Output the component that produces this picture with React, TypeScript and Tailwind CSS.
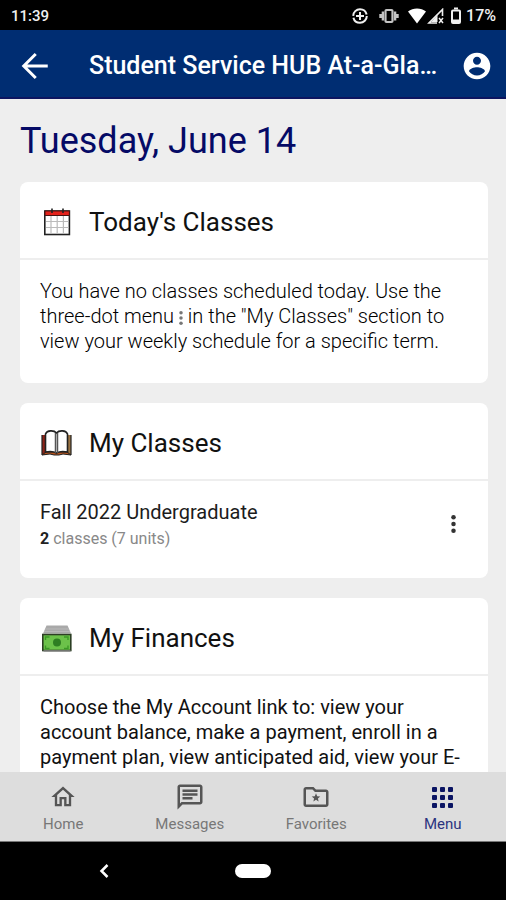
import type { ReactNode } from "react";

function CalendarIcon() {
  return (
    <svg viewBox="0 0 32 32" className="size-8" aria-hidden="true">
      <rect x="4.8" y="5" width="24.6" height="23.500" fill="#fff" stroke="#222" strokeWidth="1.6" />
      <path d="M5 5h24.400v4.500H5z" fill="#e3221b" stroke="#4a1210" strokeWidth="1" />
      <path d="M11 10v17.500M17.200 10v17.500M23.400 10v17.500M6 15.500h22.500M6 21.500h22.500" stroke="#bbb" strokeWidth="1.200" />
      <path d="M12 2.500v4.500M23 2.500v4.500" stroke="#222" strokeWidth="1.600" />
    </svg>
  );
}

function BookIcon() {
  return (
    <svg viewBox="0 0 32 32" className="size-8" aria-hidden="true">
      <path d="M2 8h4v20H2z" fill="#8e2318" />
      <path d="M27 8h4v20h-4z" fill="#9a7443" />
      <path d="M2 28V8M31 8v20" stroke="#222" strokeWidth="1.200" />
      <path d="M2 28l4-3h21l4 3-8-1-4 1h-5l-4-1z" fill="#b5531d" stroke="#222" strokeWidth="1" />
      <path d="M5.500 25V7C7 3 14 3 16.500 6 19 3 26 3 27.500 7v18C23 24 19 24.500 16.500 26 14 24.500 10 24 5.500 25z" fill="#fff" stroke="#222" strokeWidth="1.600" />
      <path d="M15.500 6v20M17.500 6v20" stroke="#555" strokeWidth="1.500" />
    </svg>
  );
}

function MoneyIcon() {
  return (
    <svg viewBox="0 0 32 32" className="size-8" aria-hidden="true">
      <path d="M6.500 3.500h21l3.500 8H3z" fill="#a9a9a9" />
      <path d="M5 7h24M4 9.500h26" stroke="#b8b8b8" strokeWidth="1" />
      <rect x="2.800" y="12.500" width="28" height="16" fill="#6cc24a" stroke="#2c3f24" strokeWidth="1.600" />
      <path d="M3.500 29h27" stroke="#888" strokeWidth="1.500" />
      <path d="M5.500 18v-3h4M24 15h4v3M28 23.500v3h-4M9.500 26.500h-4v-3" fill="none" stroke="#3b9a26" strokeWidth="1.400" />
      <circle cx="17" cy="20.500" r="4" fill="#2e7d22" />
    </svg>
  );
}

function MoreIcon({ className }: { className: string }) {
  return (
    <svg viewBox="10 4 4 16" className={className} fill="currentColor" aria-hidden="true">
      <circle cx="12" cy="6" r="2" />
      <circle cx="12" cy="12" r="2" />
      <circle cx="12" cy="18" r="2" />
    </svg>
  );
}

function StatusBar() {
  return (
    <div className="flex h-[30px] shrink-0 items-center justify-between bg-black pt-0.5 pr-2.5 pl-[11px] text-[#f0f0f0]">
      <span className="text-[15px] leading-5 font-medium">11:39</span>
      <div className="flex items-center">
        <svg viewBox="0 0 18 18" className="size-[18px]" fill="none" stroke="currentColor" aria-hidden="true">
          <circle cx="9" cy="9" r="6.800" strokeWidth="2" strokeDasharray="19.500 1.860" />
          <path d="M9 5v8M5 9h8" strokeWidth="2" />
        </svg>
        <svg viewBox="0 0 20 16" className="ml-2.5 h-4 w-5" fill="none" stroke="#c4c4c4" aria-hidden="true">
          <rect x="6.500" y="2" width="7" height="12" rx="1" strokeWidth="2.200" />
          <path d="M3.900 3.500v9M16.100 3.500v9M1.500 6v4M18.500 6v4" strokeWidth="2.400" />
        </svg>
        <svg viewBox="0 0 20 16" className="ml-2 h-4 w-5" fill="#fff" aria-hidden="true">
          <path d="M1 3.500C6-.5 14-.5 19 3.500L10 15.500z" />
        </svg>
        <svg viewBox="0 0 17 16" className="h-4 w-[17px]" fill="none" stroke="currentColor" aria-hidden="true">
          <path d="M15.500 8V1.500L2 15h8" strokeWidth="1.600" />
          <path d="M10.500 7v7H4z" fill="currentColor" stroke="none" />
          <path d="M12 10l4 5M16 10l-4 5" strokeWidth="1.500" />
        </svg>
        <svg viewBox="0 0 12 18" className="ml-1.5 h-[18px] w-3" fill="none" stroke="currentColor" aria-hidden="true">
          <path d="M4 1.500h4" strokeWidth="2" />
          <rect x="2" y="3.500" width="8" height="12.500" rx="1" strokeWidth="2" />
          <path d="M2 14h8" strokeWidth="3" />
        </svg>
        <span className="ml-1 text-base leading-5 font-medium">17%</span>
      </div>
    </div>
  );
}

function Card({ icon, title, children }: { icon: ReactNode; title: string; children: ReactNode }) {
  return (
    <section className="rounded-lg bg-white">
      <header className="flex h-[78px] items-center gap-[17px] border-b-2 border-[#eeeeee] px-5 pt-1">
        {icon}
        <h2 className="text-[26px] leading-8 text-[#111]">{title}</h2>
      </header>
      {children}
    </section>
  );
}

function HomeIcon() {
  return (
    <svg viewBox="0 0 24 24" className="size-7" fill="currentColor" aria-hidden="true">
      <path d="M12 5.690l5 4.500V18h-2v-6H9v6H7v-7.810l5-4.500M12 3L2 12h3v8h6v-6h2v6h6v-8h3L12 3z" />
    </svg>
  );
}

function MessagesIcon() {
  return (
    <svg viewBox="0 0 24 24" className="size-[30px]" fill="currentColor" aria-hidden="true">
      <path d="M4 4h16v12H5.170L4 17.170V4m0-2c-1.100 0-1.990.9-1.990 2L2 22l4-4h14c1.100 0 2-.9 2-2V4c0-1.100-.9-2-2-2H4zm2 10h8v2H6v-2zm0-3h12v2H6V9zm0-3h12v2H6V6z" />
    </svg>
  );
}

function FavoritesIcon() {
  return (
    <svg viewBox="0 0 24 24" className="size-[30px]" fill="currentColor" aria-hidden="true">
      <path d="M20 6h-8l-2-2H4c-1.100 0-2 .9-2 2v12c0 1.100.9 2 2 2h16c1.100 0 2-.9 2-2V8c0-1.100-.9-2-2-2zm0 12H4V6h5.170l2 2H20v10z" />
      <path d="M12 9l.95 2.300 2.450.2-1.860 1.600.57 2.400L12 14.200l-2.110 1.300.57-2.400-1.860-1.600 2.450-.2z" />
    </svg>
  );
}

function MenuIcon() {
  return (
    <svg viewBox="0 0 21 21" className="size-[21px]" fill="currentColor" aria-hidden="true">
      {[0, 8, 16].map((y) =>
        [0, 8, 16].map((x) => <rect key={`${x}-${y}`} x={x} y={y} width="5" height="5" rx="1" />)
      )}
    </svg>
  );
}

const tabs = [
  { label: "Home", icon: <HomeIcon />, active: false },
  { label: "Messages", icon: <MessagesIcon />, active: false },
  { label: "Favorites", icon: <FavoritesIcon />, active: false },
  { label: "Menu", icon: <MenuIcon />, active: true },
];

export default function App() {
  return (
    <div className="flex h-screen flex-col bg-[#eeeeee] font-[Roboto,sans-serif]">
      <StatusBar />
      <header className="flex h-[69px] shrink-0 items-center border-b-2 border-[#0d1560] bg-[#002d72] pt-1 pr-[13px] pl-[17px] text-white">
        <button type="button" aria-label="Back">
          <svg viewBox="0 0 24 24" className="size-9" fill="none" stroke="currentColor" strokeWidth="2" aria-hidden="true">
            <path d="M20.500 12H5M12.500 4L4.500 12l8 8" />
          </svg>
        </button>
        <h1 className="ml-9 min-w-0 flex-1 text-[25px] leading-8 font-medium whitespace-nowrap">
          Student Service HUB At-a-Gla…
        </h1>
        <button type="button" aria-label="Account">
          <svg viewBox="0 0 24 24" className="size-8" fill="currentColor" aria-hidden="true">
            <path d="M12 2C6.480 2 2 6.480 2 12s4.480 10 10 10 10-4.480 10-10S17.520 2 12 2zm0 3c1.660 0 3 1.340 3 3s-1.340 3-3 3-3-1.340-3-3 1.340-3 3-3zm0 14.200c-2.500 0-4.710-1.280-6-3.220.03-1.990 4-3.080 6-3.080 1.990 0 5.970 1.090 6 3.080-1.290 1.940-3.500 3.220-6 3.220z" />
          </svg>
        </button>
      </header>

      <main className="min-h-0 flex-1 overflow-y-auto pr-[18px] pl-5 [scrollbar-width:none]">
        <p className="pt-[22px] pb-[21px] text-4xl leading-10 text-[#050a66]">Tuesday, June 14</p>
        <div className="flex flex-col gap-5">
          <Card icon={<CalendarIcon />} title="Today's Classes">
            <p className="px-5 pt-[19px] pb-[29px] text-[20px] leading-[25px] font-light text-black">
              You have no classes scheduled today. Use the three-dot menu{" "}
              <MoreIcon className="inline h-3.5 w-1 align-[-2px] text-[#777]" /> in the "My Classes" section to view
              your weekly schedule for a specific term.
            </p>
          </Card>
          <Card icon={<BookIcon />} title="My Classes">
            <div className="flex items-center justify-between pt-[18px] pr-8 pb-[26px] pl-5">
              <div>
                <h3 className="text-[20px] leading-[27px] text-[#1c1c1c]">Fall 2022 Undergraduate</h3>
                <p className="text-base leading-[26px] text-[#888]">
                  <strong className="font-bold text-[#222]">2</strong> classes (7 units)
                </p>
              </div>
              <button type="button" aria-label="Term options" className="pb-1 text-[#333]">
                <MoreIcon className="h-[18px] w-[5px]" />
              </button>
            </div>
          </Card>
          <Card icon={<MoneyIcon />} title="My Finances">
            <p className="px-5 pt-[19px] pb-[29px] text-[20px] leading-[25px] text-[#111]">
              Choose the My Account link to: view your account balance, make a payment, enroll in a payment plan, view
              anticipated aid, view your E-
            </p>
          </Card>
        </div>
      </main>

      <nav className="grid h-[70px] shrink-0 grid-cols-4 border-b border-[#777] bg-[#dddddd]">
        {tabs.map((tab) => (
          <a
            key={tab.label}
            href={`#${tab.label.toLowerCase()}`}
            className={`flex flex-col items-center pt-2.5 ${tab.active ? "text-[#0a1463]" : "text-[#555]"}`}
          >
            <span className="flex h-[30px] items-center">{tab.icon}</span>
            <span className={`text-[15px] leading-6 ${tab.active ? "text-[#2b3480]" : "text-[#777]"}`}>{tab.label}</span>
          </a>
        ))}
      </nav>

      <div className="grid h-[58px] shrink-0 grid-cols-[1fr_36px_1fr] items-center bg-black text-white">
        <button type="button" aria-label="System back" className="justify-self-center pr-7">
          <svg viewBox="0 0 10 14" className="h-3.5 w-2.5" fill="none" stroke="currentColor" strokeWidth="2.500" aria-hidden="true">
            <path d="M8.500 1L2.500 7l6 6" />
          </svg>
        </button>
        <button type="button" aria-label="System home" className="h-3.5 rounded-full bg-white" />
      </div>
    </div>
  );
}
